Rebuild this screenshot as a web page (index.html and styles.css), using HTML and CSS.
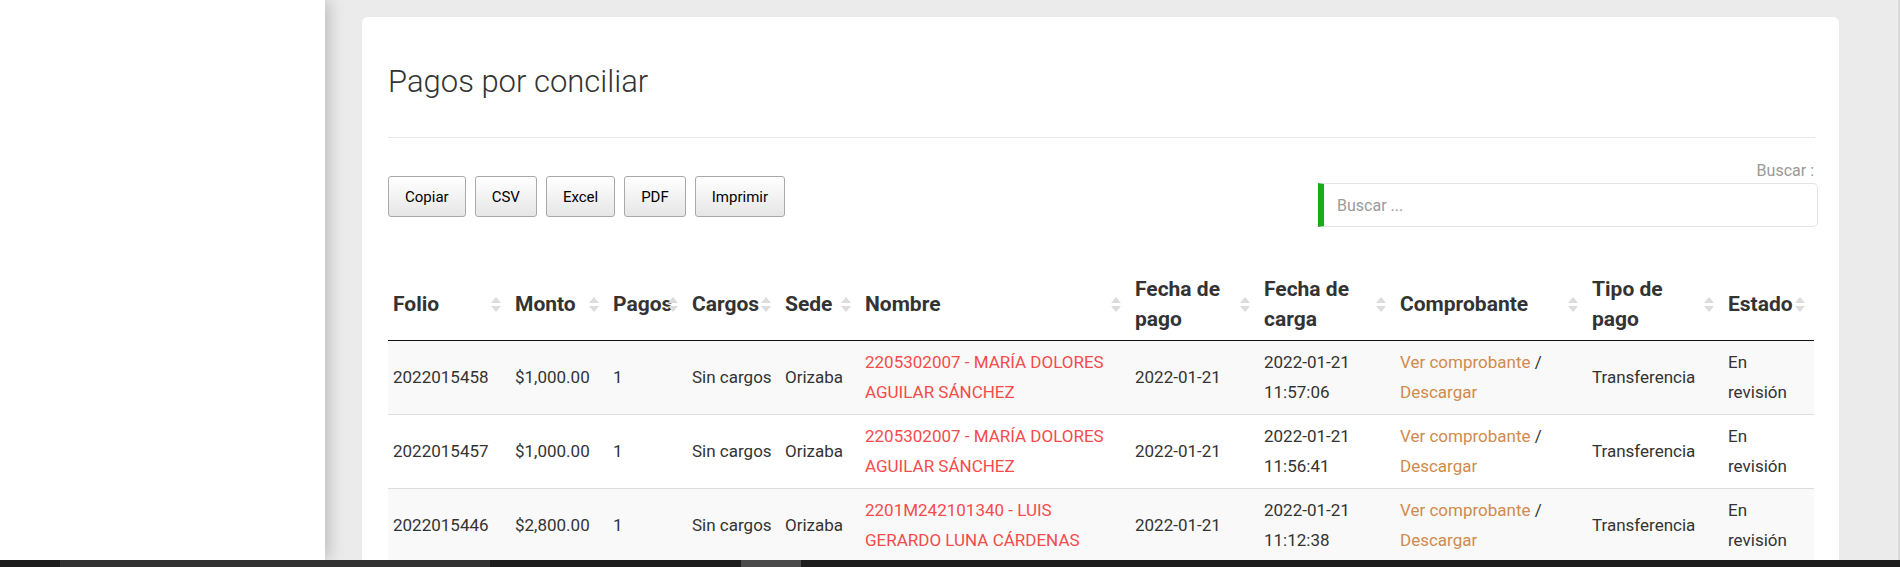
FILE: index.html
```html
<!DOCTYPE html>
<html lang="es">
<head>
<meta charset="utf-8">
<title>Pagos por conciliar</title>
<link rel="stylesheet" href="styles.css">
</head>
<body>
<div class="screen">
  <aside class="sidebar"></aside>
  <main class="main">
    <section class="card">
      <h2 class="card-title">Pagos por conciliar</h2>
      <hr class="divider">
      <div class="toolbar">
        <div class="buttons">
          <button class="btn">Copiar</button>
          <button class="btn">CSV</button>
          <button class="btn">Excel</button>
          <button class="btn">PDF</button>
          <button class="btn">Imprimir</button>
        </div>
        <div class="filter">
          <label class="filter-label">Buscar :</label>
          <input class="filter-input" type="search" placeholder="Buscar ...">
        </div>
      </div>
      <table class="data">
        <colgroup>
          <col class="c-folio"><col class="c-monto"><col class="c-pagos"><col class="c-cargos"><col class="c-sede"><col class="c-nombre"><col class="c-fpago"><col class="c-fcarga"><col class="c-comp"><col class="c-tipo"><col class="c-estado">
        </colgroup>
        <thead>
          <tr>
            <th>Folio<svg class="sort" viewBox="0 0 10 17"><polygon points="0,7 5,1 10,7"/><polygon points="0,10 5,16 10,10"/></svg></th>
            <th>Monto<svg class="sort" viewBox="0 0 10 17"><polygon points="0,7 5,1 10,7"/><polygon points="0,10 5,16 10,10"/></svg></th>
            <th>Pagos<svg class="sort" viewBox="0 0 10 17"><polygon points="0,7 5,1 10,7"/><polygon points="0,10 5,16 10,10"/></svg></th>
            <th>Cargos<svg class="sort" viewBox="0 0 10 17"><polygon points="0,7 5,1 10,7"/><polygon points="0,10 5,16 10,10"/></svg></th>
            <th>Sede<svg class="sort" viewBox="0 0 10 17"><polygon points="0,7 5,1 10,7"/><polygon points="0,10 5,16 10,10"/></svg></th>
            <th>Nombre<svg class="sort" viewBox="0 0 10 17"><polygon points="0,7 5,1 10,7"/><polygon points="0,10 5,16 10,10"/></svg></th>
            <th>Fecha de pago<svg class="sort" viewBox="0 0 10 17"><polygon points="0,7 5,1 10,7"/><polygon points="0,10 5,16 10,10"/></svg></th>
            <th>Fecha de carga<svg class="sort" viewBox="0 0 10 17"><polygon points="0,7 5,1 10,7"/><polygon points="0,10 5,16 10,10"/></svg></th>
            <th>Comprobante<svg class="sort" viewBox="0 0 10 17"><polygon points="0,7 5,1 10,7"/><polygon points="0,10 5,16 10,10"/></svg></th>
            <th>Tipo de pago<svg class="sort" viewBox="0 0 10 17"><polygon points="0,7 5,1 10,7"/><polygon points="0,10 5,16 10,10"/></svg></th>
            <th>Estado<svg class="sort" viewBox="0 0 10 17"><polygon points="0,7 5,1 10,7"/><polygon points="0,10 5,16 10,10"/></svg></th>
          </tr>
        </thead>
        <tbody>
          <tr class="odd">
            <td>2022015458</td>
            <td>$1,000.00</td>
            <td>1</td>
            <td>Sin cargos</td>
            <td>Orizaba</td>
            <td><a class="name-link" href="#">2205302007 - MARÍA DOLORES AGUILAR SÁNCHEZ</a></td>
            <td>2022-01-21</td>
            <td>2022-01-21 11:57:06</td>
            <td><a class="file-link" href="#">Ver comprobante</a> / <a class="file-link" href="#">Descargar</a></td>
            <td>Transferencia</td>
            <td>En revisión</td>
          </tr>
          <tr class="even">
            <td>2022015457</td>
            <td>$1,000.00</td>
            <td>1</td>
            <td>Sin cargos</td>
            <td>Orizaba</td>
            <td><a class="name-link" href="#">2205302007 - MARÍA DOLORES AGUILAR SÁNCHEZ</a></td>
            <td>2022-01-21</td>
            <td>2022-01-21 11:56:41</td>
            <td><a class="file-link" href="#">Ver comprobante</a> / <a class="file-link" href="#">Descargar</a></td>
            <td>Transferencia</td>
            <td>En revisión</td>
          </tr>
          <tr class="odd">
            <td>2022015446</td>
            <td>$2,800.00</td>
            <td>1</td>
            <td>Sin cargos</td>
            <td>Orizaba</td>
            <td><a class="name-link" href="#">2201M242101340 - LUIS GERARDO LUNA CÁRDENAS</a></td>
            <td>2022-01-21</td>
            <td>2022-01-21 11:12:38</td>
            <td><a class="file-link" href="#">Ver comprobante</a> / <a class="file-link" href="#">Descargar</a></td>
            <td>Transferencia</td>
            <td>En revisión</td>
          </tr>
        </tbody>
      </table>
    </section>
  </main>
</div>
<div class="taskbar">
  <div class="task task-a"></div>
  <div class="task task-b"></div>
</div>
</body>
</html>
```
FILE: styles.css
```css
html, body {
  margin: 0;
  padding: 0;
}
body {
  width: 1900px;
  height: 567px;
  overflow: hidden;
  font-family: Roboto, "Liberation Sans", Arial, sans-serif;
  color: #333;
  background: #ebebeb;
}
.screen {
  display: flex;
  height: 560px;
  overflow: hidden;
}
.sidebar {
  flex: none;
  width: 325px;
  background: #fff;
  position: relative;
  z-index: 1;
  box-shadow: 3px 0 16px rgba(0, 0, 0, 0.22);
}
.main {
  flex: 1;
  background: #ebebeb;
  padding: 17px 59px 0 37px;
  border-right: 2px solid #dadada;
  overflow: hidden;
}
.card {
  background: #fff;
  border-radius: 6px 6px 0 0;
  padding: 48px 24px 0 26px;
  min-height: 600px;
}
.card-title {
  margin: 0;
  font-weight: 300;
  font-size: 31px;
  line-height: 34px;
  color: #333;
}
.divider {
  margin: 38px 0 0;
  border: 0;
  border-top: 1px solid #e8e8e8;
  height: 0;
}
.toolbar {
  display: flex;
  justify-content: space-between;
  align-items: flex-start;
  padding-top: 24px;
}
.buttons {
  display: flex;
  gap: 9px;
  margin-top: 14px;
}
.btn {
  height: 41px;
  padding: 0 16px;
  font-family: Roboto, "Liberation Sans", Arial, sans-serif;
  font-size: 15px;
  color: #000;
  border: 1px solid #a9a9a9;
  border-radius: 3px;
  background: linear-gradient(to bottom, #ffffff 0%, #e6e6e6 100%);
}
.filter {
  display: flex;
  flex-direction: column;
  align-items: flex-end;
  margin-right: -3px;
}
.filter-label {
  font-size: 16px;
  line-height: 18px;
  color: #999;
  margin-bottom: 3px;
  margin-right: 4px;
}
.filter-input {
  box-sizing: border-box;
  width: 500px;
  height: 44px;
  border: 1px solid #e3e3e3;
  border-left: 6px solid #17ad17;
  border-radius: 0 5px 5px 0;
  padding: 0 13px;
  font-family: Roboto, "Liberation Sans", Arial, sans-serif;
  font-size: 16px;
  color: #555;
  outline: none;
}
.filter-input::placeholder {
  color: #9a9a9a;
}
.data {
  margin-top: 41px;
  width: 1426px;
  table-layout: fixed;
  border-collapse: collapse;
}
.c-folio { width: 122px; }
.c-monto { width: 98px; }
.c-pagos { width: 79px; }
.c-cargos { width: 93px; }
.c-sede { width: 80px; }
.c-nombre { width: 270px; }
.c-fpago { width: 129px; }
.c-fcarga { width: 136px; }
.c-comp { width: 192px; }
.c-tipo { width: 136px; }
.c-estado { width: 91px; }
.data th {
  position: relative;
  text-align: left;
  vertical-align: middle;
  font-weight: 700;
  font-size: 21px;
  line-height: 30px;
  color: #333;
  padding: 6px 22px 6px 5px;
  border-bottom: 1px solid #111;
}
.sort {
  position: absolute;
  right: 9px;
  top: 50%;
  width: 10px;
  height: 17px;
  margin-top: -8px;
  fill: #dcdcdc;
}
.data td {
  vertical-align: middle;
  font-size: 17px;
  line-height: 30px;
  color: #333;
  padding: 6px 6px 7px 5px;
  border-top: 1px solid #ddd;
}
.data tbody tr:first-child td {
  border-top: 0;
}
.data tr.odd td {
  background: #f9f9f9;
}
.data tr.even td {
  background: #fff;
}
.name-link {
  color: #f44b4b;
  text-decoration: none;
}
.file-link {
  color: #d18a4d;
  text-decoration: none;
}
.taskbar {
  display: flex;
  height: 7px;
  background: #1d1d1d;
}
.task-a {
  margin-left: 60px;
  width: 430px;
  background: #323232;
}
.task-b {
  margin-left: 251px;
  width: 60px;
  background: #4a4a4a;
}
```
